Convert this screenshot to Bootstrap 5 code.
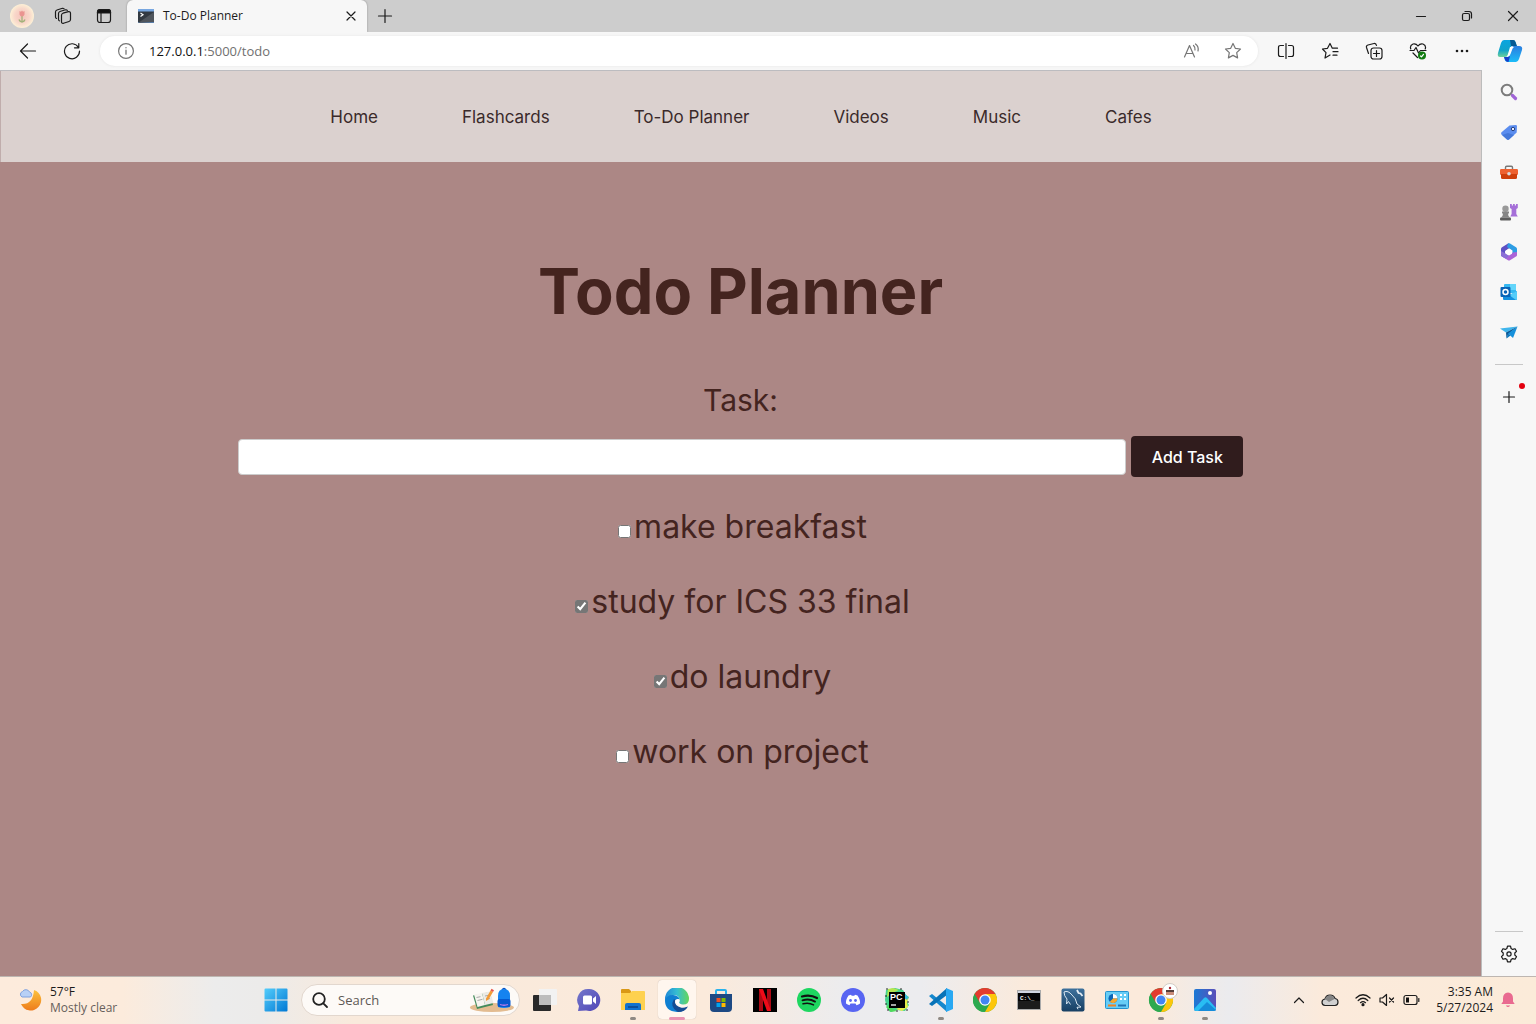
<!DOCTYPE html>
<html lang="en">
<head>
<meta charset="utf-8">
<meta name="viewport" content="width=device-width, initial-scale=1">
<title>To-Do Planner</title>
<link href="https://cdn.jsdelivr.net/npm/bootstrap@5.3.0/dist/css/bootstrap.min.css" rel="stylesheet">
<style>
  body { font-family: "Open Sans", "Noto Sans", sans-serif; font-size: 12px; line-height: 16px; color: #1b1b1b; background: #f7f7f7; }
  svg { display: block; flex: none; }
  button { padding: 0; border: 0; background: transparent; color: inherit; }
  .line-icon { fill: none; stroke: #1b1b1b; stroke-width: 1.2; stroke-linecap: round; stroke-linejoin: round; }
  .soft-icon { stroke: #767676; }

  .tab-strip { height: 32px; background: #cdcdcd; }
  .strip-tools { width: 127px; padding-left: 10px; gap: 20px; }
  .browser-tab { width: 240px; padding: 0 10px; background: #f7f7f7; border-radius: 6px 6px 0 0; box-shadow: 0 0 2px #888; clip-path: inset(-2px -2px 0 -2px); }
  .win-btn { width: 46px; }
  .new-tab { width: 36px; }
  .toolbar { height: 38px; background: #f7f7f7; }
  .tool-btn { width: 44px; height: 30px; }
  .toolbar-start { padding-left: 6px; padding-right: 6px; }
  .toolbar-end { padding-left: 6px; padding-right: 4px; }
  .address-bar { height: 30px; border-radius: 15px; background: #fff; box-shadow: 0 0 3px #e4e4e4; padding: 0 16px 0 18px; gap: 15px; }
  .address-text { font-size: 13px; color: #707070; }
  .address-text b { font-weight: 400; color: #111; }

  .web-page { background: #ac8785; border-top: 1px solid #bcbcc0; border-right: 1px solid #bcbcbc; font-family: Inter, sans-serif; color: #44241f; }
  .site-nav { height: 91px; background: #dbd1cf; border-left: 1px solid #c0adac; }
  .site-nav ul { gap: 84px; }
  .site-nav a { font-size: 17px; line-height: 24px; color: #3a2a2a; text-decoration: none; }
  .planner { font-size: 30px; line-height: 45px; padding-top: 84px; }
  .planner h1 { font-size: 63px; line-height: 90px; font-weight: 700; margin-bottom: 42px; }
  .task-entry { gap: 5px; margin-top: 13px; margin-bottom: 27px; }
  .task-input { width: 60%; height: 36px; border: 1px solid #ccc; border-radius: 4px; background: #fff; font-size: 16px; padding: 0 10px; }
  .add-btn { width: 112px; height: 41px; border-radius: 4px; background: #301c1d; color: #fff; font-size: 16px; font-weight: 500; line-height: 24px; }
  .task-list { display: grid; gap: 30px; font-size: 32px; }
  .task-list input { margin: 3px 3px 3px 4px; accent-color: #767676; }

  .side-rail { width: 54px; background: #f7f7f7; padding: 2px 0; }
  .rail-btn { width: 40px; height: 40px; }
  .rail-line { width: 28px; height: 1px; background: #c8c8c8; }
  .rail-line.upper { margin: 12px 0; }
  .rail-line.lower { margin: auto 0 2px; }
  .alert-dot { position: absolute; right: 4px; top: 6px; width: 6px; height: 6px; border-radius: 50%; background: #e3000f; }

  .taskbar { height: 48px; padding-bottom: 2px; border-top: 1px solid #bdb6b1; background: linear-gradient(90deg, #fdebdc 0, #fcebdc 8%, #ececec 14%, #ecebea 17%, #f9eadc 23%, #fbeadb 46%, #ececee 55%, #ececef 60%, #fbeadb 67%, #fbeadb 75%, #ebebee 80%, #fbeadb 86%, #fbebd9 100%); }
  .weather { width: 254px; padding-left: 18px; gap: 8px; }
  .dim-text { color: #66605b; }
  .app-btn { width: 44px; height: 45px; position: relative; }
  .app-btn.running::after { content: ""; position: absolute; left: 19px; bottom: 2px; width: 6px; height: 3px; border-radius: 2px; background: #8f8983; }
  .app-btn.active::before { content: ""; position: absolute; inset: 3px; border-radius: 4px; background: #fff6ee; box-shadow: 0 0 1px #b9aea5; }
  .app-btn.active::after { left: 14px; width: 16px; background: #e994b2; }
  .app-btn svg { position: relative; }
  .search-pill { width: 219px; height: 32px; margin: 0 3px; border-radius: 16px; background: #fdfaf7; border: 1px solid #e2d7ce; padding: 0 4px 0 9px; gap: 9px; }
  .search-pill input { min-width: 0; border: 0; background: transparent; outline: 0; font-size: 13px; color: #5d5955; padding: 0; }
  .search-pill input::placeholder { color: #5d5955; opacity: 1; }
  .tray { padding-right: 21px; gap: 8px; }
</style>
<script src="https://cdn.jsdelivr.net/npm/bootstrap@5.3.0/dist/js/bootstrap.bundle.min.js"></script>
</head>
<body class="d-flex flex-column min-vh-100">

<header>
  <div class="tab-strip d-flex">
    <div class="strip-tools d-flex align-items-center">
      <button aria-label="Profile"><svg width="24" height="24"><defs><radialGradient id="pf"><stop offset="0" stop-color="#f4c4bb"/><stop offset=".6" stop-color="#f8d6c9"/><stop offset="1" stop-color="#fdf0d6"/></radialGradient></defs><circle cx="12" cy="12" r="12" fill="url(#pf)"/><path d="M12 12v6M12 18q-2.500-.5-3-2.500M12 18q2.500-.5 3-2.500" stroke="#a3b27a" stroke-width="1.300" fill="none"/><path d="M9.500 7l1.500.8 1-1.300 1 1.300 1.500-.8v3.500q-.7 2-2.500 2t-2.500-2z" fill="#ea9490"/></svg></button>
      <button aria-label="Workspaces"><svg class="line-icon" width="18" height="18"><path d="M9 6.200l5.500-1.500q2-.3 2 1.500v6.300q0 1.500-1.500 2l-5.500 1.800q-2 .4-2-1.500V8.300q0-1.600 1.500-2.100z"/><path d="M5.500 13.800q-1 0-1-1.800V6.500q0-1.500 1.500-2l5.500-1.700q1.300-.3 1.800.7M2.500 11.500q-1-.3-1-1.500V5q0-1.500 1.500-2l5.500-1.700q1-.2 1.500.4"/></svg></button>
      <button aria-label="Tab actions" class="ms-1"><svg class="line-icon" width="16" height="16"><rect x="1.500" y="1.500" width="13" height="13" rx="2.500"/><path d="M1.500 5V4q0-2.500 2.500-2.500h8q2.500 0 2.500 2.500v1z" fill="#111"/><path d="M5 5v9"/></svg></button>
    </div>
    <div class="browser-tab d-flex align-items-center">
      <svg width="18" height="16"><rect x="1" y="1" width="16" height="14" fill="#333a42"/><path d="M1 1h16v2.500H1z" fill="#78a7e0"/><path d="M1 14.500h16" stroke="#5b83b4"/><path d="M1 15L17 4v10z" fill="#50565d"/><path d="M3.500 5l2.500 1.700-2.500 1.700" fill="none" stroke="#fff" stroke-width="1.200"/></svg>
      <span class="ms-2 flex-grow-1">To-Do Planner</span>
      <button aria-label="Close tab"><svg class="line-icon" width="12" height="12"><path d="M2 2l8 8M10 2l-8 8"/></svg></button>
    </div>
    <button class="new-tab d-flex align-items-center justify-content-center" aria-label="New tab"><svg class="line-icon" width="16" height="16"><path d="M8 1.500v13M1.500 8h13"/></svg></button>
    <div class="d-flex ms-auto">
      <button class="win-btn d-flex align-items-center justify-content-center" aria-label="Minimize"><svg class="line-icon" width="12" height="12"><path d="M1.500 6.500h9"/></svg></button>
      <button class="win-btn d-flex align-items-center justify-content-center" aria-label="Restore"><svg class="line-icon" width="12" height="12"><rect x="1.500" y="3.500" width="7" height="7" rx="1.500"/><path d="M4 1.500h4q2.500 0 2.500 2.500v4"/></svg></button>
      <button class="win-btn d-flex align-items-center justify-content-center" aria-label="Close"><svg class="line-icon" width="12" height="12"><path d="M1.500 1.500l9 9M10.500 1.500l-9 9"/></svg></button>
    </div>
  </div>

  <div class="toolbar d-flex align-items-center">
    <div class="toolbar-start d-flex">
      <button class="tool-btn d-flex align-items-center justify-content-center" aria-label="Back"><svg class="line-icon" width="18" height="18"><path d="M16.500 9h-15M8.500 2l-7 7 7 7"/></svg></button>
      <button class="tool-btn d-flex align-items-center justify-content-center" aria-label="Refresh"><svg class="line-icon" width="18" height="18"><path d="M15.500 5.500A7.500 7.500 0 1 0 16.500 9M15.800 1.500v4.300h-4.300"/></svg></button>
    </div>
    <div class="address-bar d-flex align-items-center flex-grow-1">
      <svg class="line-icon soft-icon" width="16" height="16"><circle cx="8" cy="8" r="7.400"/><path d="M8 7.200v4M8 4.600v.2" stroke-width="1.300"/></svg>
      <span class="address-text flex-grow-1"><b>127.0.0.1</b>:5000/todo</span>
      <button aria-label="Read aloud" class="me-2"><svg class="line-icon soft-icon" width="18" height="16"><path d="M1.500 14L6.500 2.500 11.500 14M3.200 10.500h6.600M10.500 2.500q2 1.800 1.500 4.500M12.500 1q3.500 2.500 2.500 7"/></svg></button>
      <button aria-label="Add to favorites"><svg class="line-icon soft-icon" width="18" height="18"><path d="M9 1.500l2.300 4.800 5.200.7-3.800 3.600.9 5.300L9 13.400l-4.600 2.500.9-5.300L1.500 7l5.200-.7z"/></svg></button>
    </div>
    <div class="toolbar-end d-flex">
      <button class="tool-btn d-flex align-items-center justify-content-center" aria-label="Split screen"><svg class="line-icon" width="18" height="18"><path d="M6.500 3.500h-3q-2 0-2 2v7q0 2 2 2h3M11.500 3.500h3q2 0 2 2v7q0 2-2 2h-3M9 1.500v15"/></svg></button>
      <button class="tool-btn d-flex align-items-center justify-content-center" aria-label="Favorites"><svg class="line-icon" width="18" height="18"><path d="M9 13l-5 3 1-5.300L1.500 7l5-.7 2.500-4.800 2.300 4.700h5.200M12 9.700h5M12 13.200h4"/></svg></button>
      <button class="tool-btn d-flex align-items-center justify-content-center" aria-label="Collections"><svg class="line-icon" width="18" height="18"><rect x="6" y="6" width="11" height="11" rx="2.500"/><path d="M11.500 8.500v6M8.500 11.500h6M3.500 11.500L1.500 5.500q-.5-2 1.500-2.500l6-1.500q2-.4 2.500 2"/></svg></button>
      <button class="tool-btn d-flex align-items-center justify-content-center" aria-label="Browser essentials"><svg class="line-icon" width="18" height="18"><path d="M1.800 7Q.5 3.500 4 2q3-.7 5 2 2-2.700 5-2 3.500 1.500 2.200 5M1 8.500h4l2-3 2.500 5.500L11.500 8.500H17M4 11l4.500 4.500"/><circle cx="13" cy="13.500" r="4" fill="#107c10" stroke="none"/><path d="M11.500 14l1 .8 2-2.500" stroke="#fff"/></svg></button>
      <button class="tool-btn d-flex align-items-center justify-content-center" aria-label="Settings and more"><svg width="18" height="18" fill="#1b1b1b"><circle cx="4" cy="9" r="1.300"/><circle cx="9" cy="9" r="1.300"/><circle cx="14" cy="9" r="1.300"/></svg></button>
      <button class="tool-btn ms-1 d-flex align-items-center justify-content-center" aria-label="Copilot"><svg width="26" height="26" viewBox="0 0 26 26"><defs><linearGradient id="c1" x2="0" y2="1"><stop stop-color="#0aa5e0"/><stop offset=".6" stop-color="#10a3cb"/><stop offset="1" stop-color="#6ed19b"/></linearGradient><linearGradient id="c2" x2="0" y2="1"><stop stop-color="#2b7de0"/><stop offset="1" stop-color="#1bbcf8"/></linearGradient></defs><path d="M7 2h9q2 0 2.500 2l1 4h-5L11 17q-.5 2-3 2H3q-3 0-2-4L4 5q1-3 3-3z" fill="url(#c1)"/><path d="M13 2h3q2 0 2.500 2l1.500 4h-6z" fill="#075a94"/><path d="M17 8h5q4 0 3 4l-3 9q-1 3-3 3h-8q-3 0-3.500-3L7 19h3q2 0 2.500-2l2-6q.5-3 2.500-3z" fill="url(#c2)"/><path d="M7 19h4l2-1-1.500 6q-3 0-3.700-3z" fill="#173fc9"/><path d="M13 9h4q-1.500 1-2 3l-1.500 4q-.5 2-3 2.500h-1q1-.5 1.500-2.500z" fill="#fff"/></svg></button>
    </div>
  </div>
</header>

<div class="d-flex flex-grow-1">
  <main class="web-page flex-grow-1">
    <nav class="site-nav d-flex align-items-center justify-content-center">
      <ul class="list-unstyled d-flex m-0">
        <li><a href="#">Home</a></li><li><a href="#">Flashcards</a></li><li><a href="#">To-Do Planner</a></li><li><a href="#">Videos</a></li><li><a href="#">Music</a></li><li><a href="#">Cafes</a></li>
      </ul>
    </nav>
    <section class="planner text-center">
      <h1>Todo Planner</h1>
      <form>
        <label class="d-block" for="task">Task:</label>
        <div class="task-entry d-flex align-items-center justify-content-center">
          <input class="task-input" type="text" id="task">
          <button class="add-btn" type="button">Add Task</button>
        </div>
      </form>
      <ul class="task-list list-unstyled m-0">
        <li><input type="checkbox" id="t1"><label for="t1">make breakfast</label></li>
        <li><input type="checkbox" id="t2" checked><label for="t2">study for ICS 33 final</label></li>
        <li><input type="checkbox" id="t3" checked><label for="t3">do laundry</label></li>
        <li><input type="checkbox" id="t4"><label for="t4">work on project</label></li>
      </ul>
    </section>
  </main>

  <aside class="side-rail d-flex flex-column align-items-center">
    <button class="rail-btn d-flex align-items-center justify-content-center" aria-label="Search"><svg width="20" height="20" fill="none"><circle cx="8" cy="8" r="5.300" stroke="#7c7c7c" stroke-width="2"/><path d="M11.800 11.800l2 2" stroke="#888" stroke-width="2"/><path d="M13.500 13.500l3 3" stroke="#a065d6" stroke-width="3.200" stroke-linecap="round"/></svg></button>
    <button class="rail-btn d-flex align-items-center justify-content-center" aria-label="Shopping"><svg width="20" height="20"><path d="M10.500 3.500L17 3l1 .8-.3 6.700-7.700 7q-1 .8-2 0L2.500 12.500q-1-1.200 0-2.200z" fill="#5b8def"/><path d="M3 13l6-2 6 2-5 4.500q-1 .6-2 0z" fill="#4579da"/><circle cx="14" cy="7" r="1.700" fill="#e6edff" stroke="#28417e"/></svg></button>
    <button class="rail-btn d-flex align-items-center justify-content-center" aria-label="Tools"><svg width="20" height="20"><path d="M6.500 7V5.500q0-1.200 1.200-1.200h4.600q1.200 0 1.200 1.200V7" fill="none" stroke="#777" stroke-width="1.400"/><rect x="1" y="7" width="18" height="6" rx="1.200" fill="#ee6130"/><path d="M2 12h16v3.500q0 1.500-1.500 1.500h-13Q2 17 2 15.500z" fill="#ce3f0c"/><circle cx="10" cy="11.800" r="1.800" fill="#d7dbe0"/></svg></button>
    <button class="rail-btn d-flex align-items-center justify-content-center" aria-label="Games"><svg width="20" height="20"><path d="M11 2h1.800v1.500H14V2h1.800v1.500H17V2h1.800v4l-1.500 1v5l1.500 2.500h-7.500L12.600 12V7L11 6z" fill="#a56fd8"/><circle cx="6.500" cy="6.700" r="3.200" fill="#999"/><path d="M3 9.500h7v2H9q0 3 2 4H2q2-1 2-4H3z" fill="#858585"/><rect x="1" y="15.500" width="11" height="3" rx="1" fill="#5c5c5c"/></svg></button>
    <button class="rail-btn d-flex align-items-center justify-content-center" aria-label="Microsoft 365"><svg width="20" height="20"><path d="M10 1.500Q9.500 1.300 9 1.600L3 5.200q-1 .6-1 1.700v6q0 1 1 1.700l3 1.500V9l6-4z" fill="#5e50c4"/><path d="M9 1.600q1-.5 2 0l6 3.600q1 .6 1 1.700v6.300L13.500 11V8.500L8 5z" fill="#2e9de4"/><path d="M18 10v3q0 1-1 1.600l-6 3.600q-1 .6-2 0L3 14.600l4.500-1.100 6.500-3z" fill="#ab65d8"/><path d="M2 9l4.500 2.500 3.500 2-3 3.300-4-2.200q-1-.7-1-1.700z" fill="#8b6ed6"/><path d="M10 6.800l3 1.700v3.300l-3 1.700-3-1.700V8.500z" fill="#fff"/></svg></button>
    <button class="rail-btn d-flex align-items-center justify-content-center" aria-label="Outlook"><svg width="20" height="20"><rect x="5" y="2" width="12" height="9" rx="1" fill="#35b8f1"/><path d="M11 2h6v6h-6z" fill="#63d5fa"/><path d="M4 9l7 4 7-4v8q0 1-1 1H5q-1 0-1-1z" fill="#1490df"/><path d="M18 9v8q0 1-1 1l-7-5z" fill="#55cdf9"/><rect x="1.500" y="5" width="10" height="10" rx="1" fill="#0864b7"/><circle cx="6.500" cy="10" r="2.500" fill="none" stroke="#fff" stroke-width="1.500"/></svg></button>
    <button class="rail-btn d-flex align-items-center justify-content-center" aria-label="Drop"><svg width="20" height="20"><path d="M1 6.500l17.500-2L7 10.500z" fill="#3fb5ec"/><path d="M7 10.500l11.500-6L9 12.500 7.500 16.500z" fill="#0b5793"/><path d="M9 11.500l9.500-7L14 16z" fill="#1690db"/><path d="M7.500 16.500L9 11.500l2.500 2z" fill="#0b76bd"/></svg></button>
    <div class="rail-line upper"></div>
    <button class="rail-btn position-relative d-flex align-items-center justify-content-center" aria-label="Customize"><svg class="line-icon" width="14" height="14"><path d="M7 1.500v11M1.500 7h11"/></svg><span class="alert-dot"></span></button>
    <div class="rail-line lower"></div>
    <button class="rail-btn d-flex align-items-center justify-content-center" aria-label="Settings"><svg class="line-icon" width="18" height="18" viewBox="0 0 18 18"><path d="M7.500 1.200h3l.6 2.300 1.600.9 2.300-.7 1.500 2.600-1.700 1.700v2l1.700 1.700-1.500 2.600-2.300-.7-1.600.9-.6 2.300h-3l-.6-2.300-1.600-.9-2.300.7-1.500-2.600L3.200 10V8L1.500 6.300 3 3.700l2.300.7 1.600-.9z"/><circle cx="9" cy="9" r="2.100"/></svg></button>
  </aside>
</div>

<footer class="taskbar d-flex align-items-center">
  <div class="weather d-flex align-items-center">
    <svg width="24" height="26"><defs><linearGradient id="mo" x2="0" y2="1"><stop stop-color="#fcc23c"/><stop offset="1" stop-color="#ee7c1c"/></linearGradient></defs><path d="M16 3a10.500 10.500 0 1 1-13 14Q15 18 16 3z" fill="url(#mo)"/><path d="M4 10a3 3 0 0 1 .5-5.500 4 4 0 0 1 7 .5 2.800 2.800 0 0 1 1 5z" fill="#b8d0f6" stroke="#7fa1de"/></svg>
    <div><div>57°F</div><div class="dim-text">Mostly clear</div></div>
  </div>
  <button class="app-btn d-flex align-items-center justify-content-center" aria-label="Start"><svg width="24" height="24"><defs><linearGradient id="wi" x2="1" y2="1"><stop stop-color="#54cdfb"/><stop offset="1" stop-color="#0078d4"/></linearGradient></defs><path d="M.5 1.500q0-1 1-1h10v11H.5zM12.500.5h10q1 0 1 1v10h-11zM.5 12.500h11v11h-10q-1 0-1-1zM12.500 12.500h11v10q0 1-1 1h-10z" fill="url(#wi)"/></svg></button>
  <div class="search-pill d-flex align-items-center">
    <svg width="18" height="18" fill="none" stroke="#222" stroke-width="1.800" stroke-linecap="round"><circle cx="8" cy="8" r="5.800"/><path d="M12.300 12.300L16 16"/></svg>
    <input class="flex-grow-1" type="text" placeholder="Search" aria-label="Search">
    <svg width="46" height="28"><ellipse cx="23" cy="21.500" rx="22" ry="4.500" fill="#e3bc91"/><path d="M4 9.500l17-3.500 3 13-16 4z" fill="#438b5b"/><path d="M5 8.500L13 7l3 12-7.500 2z" fill="#f6f4ef"/><path d="M13 7l8-1.500 3.500 11.500-8.500 2z" fill="#eceae5"/><path d="M7.500 11.500l4-.8M8.500 14.500l5-1.200M16 10l4-.8M17 13.500l4-1" stroke="#aaa"/><path d="M17 12.500l4.500-8 2.500 1.500-4.500 7.500-2.500 1.500z" fill="#f39b37"/><path d="M21.500 4.500l1-1.800 2.500 1.500-1 1.800z" fill="#e8554b"/><path d="M33 4.500q2-4 4 0" fill="none" stroke="#0a52c2" stroke-width="1.500"/><path d="M29 10q0-7 6-7t6 7v11q-6 2-12 0z" fill="#1583f0"/><rect x="28.500" y="13" width="13" height="8" rx="2" fill="#0659cf"/><path d="M31 18.500q4 1.500 8 0" stroke="#b87bea" fill="none" stroke-width="1.300"/></svg>
  </div>
  <button class="app-btn d-flex align-items-center justify-content-center" aria-label="Task view"><svg width="24" height="24"><rect x="0" y="7" width="18" height="16" rx="1" fill="#292929"/><path d="M6 1h17q1 0 1 1v14q0 1-1 1H6z" fill="#f2f2f2"/><path d="M6 7h12v10H6z" fill="#bcbcbc"/></svg></button>
  <button class="app-btn d-flex align-items-center justify-content-center" aria-label="Chat"><svg width="24" height="24"><defs><linearGradient id="ch" x2="1" y2="1"><stop stop-color="#7377ca"/><stop offset="1" stop-color="#5146b7"/></linearGradient></defs><path d="M12 1a11 11 0 1 1-3 21.500L1 23l1-5A11 11 0 0 1 12 1z" fill="url(#ch)"/><rect x="6" y="7.500" width="9" height="9" rx="1.500" fill="#fff"/><path d="M16 10.500l3-2.500v8l-3-2.500z" fill="#fff"/></svg></button>
  <button class="app-btn running d-flex align-items-center justify-content-center" aria-label="File Explorer"><svg width="24" height="24"><path d="M0 2q0-1 1-1h7l2 2v5H0z" fill="#d99816"/><path d="M0 5h9l2-2h12q1 0 1 1v18H0z" fill="#fed14f"/><path d="M4 22v-5q0-2 2-2h12q2 0 2 2v5z" fill="#1173cf"/><path d="M7 18h10v2H7z" fill="#0b519d"/></svg></button>
  <button class="app-btn running active d-flex align-items-center justify-content-center" aria-label="Microsoft Edge"><svg width="24" height="24"><defs><linearGradient id="eg"><stop stop-color="#2087d7"/><stop offset=".5" stop-color="#35bed2"/><stop offset="1" stop-color="#66d659"/></linearGradient></defs><path d="M0 11A12 12 0 0 1 24 11q0 5.500-6 5.500-5-.5-3.500-3Q15 8 10 7 3 7 0 14z" fill="url(#eg)"/><path d="M0 12.500Q2 6.500 8 7q6 .5 6.500 4.500-3-1.500-4.500 1-1 6 5 8 4 .5 7.500-2Q19 24 12 24 0 23 0 12.500z" fill="#0f7fd2"/><path d="M9 11q-5 8 4 13 7 0 10-5.500-3 1.500-6.500 1.200Q9 18 10 12z" fill="#164c93"/><path d="M14.500 11.500q.3 1.500-.5 2.500-.5 2 2 2.700-4 .5-5-2.500 0-3.500 3.500-2.700z" fill="#fff"/></svg></button>
  <button class="app-btn d-flex align-items-center justify-content-center" aria-label="Microsoft Store"><svg width="24" height="24"><path d="M7 6V3q0-1 1-1h8q1 0 1 1v3" fill="none" stroke="#28b2ed" stroke-width="2"/><path d="M1 6h22v14q0 4-4 4H5q-4 0-4-4z" fill="#1d4983"/><path d="M7.500 10h4v4h-4z" fill="#f25022"/><path d="M12.500 10h4v4h-4z" fill="#7fba00"/><path d="M7.500 15h4v4h-4z" fill="#00a4ef"/><path d="M12.500 15h4v4h-4z" fill="#ffb900"/></svg></button>
  <button class="app-btn d-flex align-items-center justify-content-center" aria-label="Netflix"><svg width="24" height="24"><path d="M0 0h24v24H0z"/><path d="M6 1h4v22H6zM14 1h4v22h-4z" fill="#ad0914"/><path d="M6 1h4l8 22h-4z" fill="#f00b19"/></svg></button>
  <button class="app-btn d-flex align-items-center justify-content-center" aria-label="Spotify"><svg width="24" height="24" fill="none" stroke="#111" stroke-linecap="round"><circle cx="12" cy="12" r="12" fill="#1ed760" stroke="none"/><path d="M5 8.500q8-2.500 15 1.500" stroke-width="2.200"/><path d="M5.500 12.300q7-2 12.500 1.300" stroke-width="1.900"/><path d="M6 15.700q6-1.500 10.500 1.200" stroke-width="1.500"/></svg></button>
  <button class="app-btn d-flex align-items-center justify-content-center" aria-label="Discord"><svg width="24" height="24"><circle cx="12" cy="12" r="12" fill="#5865f2"/><path d="M7.500 7.500l2.500-.8.7 1.100h2.600l.7-1.100 2.500.8q3 4.500 2.500 8-1.500 1.300-3.500 1.700l-1-1.600h-5l-1 1.600q-2-.4-3.500-1.700-.5-3.500 2.500-8z" fill="#fff"/><circle cx="9.500" cy="12.500" r="1.400" fill="#5865f2"/><circle cx="14.500" cy="12.500" r="1.400" fill="#5865f2"/></svg></button>
  <button class="app-btn d-flex align-items-center justify-content-center" aria-label="PyCharm"><svg width="24" height="24"><path d="M1 2l9-2 8 2 3 5 3 2-2 5 2 3-4 6-8-1-7 2-3-4-2-8z" fill="#45d48b"/><path d="M3 1l5-1 6 2-7 3-5 4z" fill="#b5e650"/><path d="M18 8l5 3-1 4 1 4-6 4-6-2 7-3z" fill="#e7ed47"/><path d="M19 5l4 4-1 3-3-2z" fill="#37bbe3"/><path d="M1 19l4-3 3 5 4 2-6 1z" fill="#50d95c"/><g fill="#111"><circle cx="2" cy="1" r=".8"/><circle cx="16" cy="1" r=".8"/><circle cx="1" cy="8" r=".8"/><circle cx="1" cy="16" r=".8"/><circle cx="3" cy="22" r=".8"/><circle cx="12" cy="23" r=".8"/><circle cx="22" cy="22" r=".8"/><circle cx="23" cy="14" r=".8"/></g><rect x="4" y="4" width="16" height="16"/><text x="5" y="12" font-family="Liberation Sans" font-weight="700" font-size="9" fill="#fff">PC</text><path d="M6 17h5" stroke="#fff" stroke-width="1.300"/></svg></button>
  <button class="app-btn running d-flex align-items-center justify-content-center" aria-label="Visual Studio Code"><svg width="24" height="24"><path d="M0 8l3-2 15 12v6z" fill="#1487cd"/><path d="M0 16l3 2L18 7V0z" fill="#0873b8"/><path d="M17 0l7 3v18l-7 3z" fill="#29a8f2"/></svg></button>
  <button class="app-btn d-flex align-items-center justify-content-center" aria-label="Chrome"><svg width="24" height="24"><g id="chrome"><circle cx="12" cy="12" r="12" fill="#2da94f"/><path d="M12 12L1.600 6A12 12 0 0 1 22.400 6z" fill="#e33b2e"/><path d="M12 6h10.400A12 12 0 0 1 12 24l5.200-9z" fill="#fdc60b"/><path d="M1.600 6L6.800 15 12 12 12 6z" fill="#e33b2e"/><path d="M1.600 6L6.800 15 12 24A12 12 0 0 1 1.600 6z" fill="#2da94f"/><circle cx="12" cy="12" r="5.800" fill="#fff"/><circle cx="12" cy="12" r="4.500" fill="#4285f4"/></g></svg></button>
  <button class="app-btn d-flex align-items-center justify-content-center" aria-label="Command Prompt"><svg width="24" height="24"><rect x=".5" y="2.500" width="23" height="19" fill="#050505" stroke="#aaa"/><path d="M1 3h22v2H1z" fill="#d0d5df"/><path d="M1 21V13h22v8z" fill="#1c1c1c"/><text x="3" y="12" font-family="Liberation Mono" font-weight="700" font-size="6" fill="#fff">C:\_</text></svg></button>
  <button class="app-btn d-flex align-items-center justify-content-center" aria-label="MySQL Workbench"><svg width="24" height="24"><defs><linearGradient id="my" x2="0" y2="1"><stop stop-color="#3e719c"/><stop offset="1" stop-color="#173f63"/></linearGradient></defs><rect x=".5" y=".5" width="23" height="23" rx="2" fill="url(#my)"/><path d="M3 4q4-2 8 3 4 3 5 9l4 3-4 .3 1 2M3 4q0 4 3 7l-.5 5 2-2.500 2 3" fill="none" stroke="#d9e6f1"/><path d="M16 2l1.500 3 2 .5 2 2.500" stroke="#e5edf5" stroke-width="1.800" fill="none"/></svg></button>
  <button class="app-btn d-flex align-items-center justify-content-center" aria-label="Control Panel"><svg width="24" height="24"><rect x=".5" y="3.500" width="23" height="17" rx="1" fill="#67cdf6" stroke="#2393cf"/><circle cx="8" cy="10.500" r="4.500" fill="#0b66b7"/><path d="M8 10.500V6a4.500 4.500 0 0 1 4.500 4.500z" fill="#fff"/><path d="M8 10.500h4.500A4.500 4.500 0 0 1 4.800 13.700z" fill="#f7a62b"/><path d="M15 7h2M15 11h2M19 7h2M19 11h2" stroke="#fff" stroke-width="2"/><path d="M3 17.500h8" stroke="#f08322" stroke-width="2"/><path d="M13 17.500h8" stroke="#2274b5" stroke-width="2"/></svg></button>
  <button class="app-btn running d-flex align-items-center justify-content-center" aria-label="Chrome profile"><svg class="overflow-visible" width="24" height="24"><use href="#chrome"/><circle cx="21" cy="3" r="7.500" fill="#fff" stroke="#d2cbc5"/><path d="M17 3h8v4h-8z" fill="#c98b78"/><path d="M17 2h8v2h-8z" fill="#553e39"/><circle cx="21" cy="0" r="1.200" fill="#a82835"/></svg></button>
  <button class="app-btn running d-flex align-items-center justify-content-center" aria-label="Photos"><svg width="24" height="24"><defs><linearGradient id="ph" x2="1"><stop stop-color="#1b79d5"/><stop offset="1" stop-color="#5a4fb9"/></linearGradient></defs><rect x="1" y="1" width="22" height="22" rx="2" fill="url(#ph)"/><path d="M1 21L11 10q1.500-1.500 3 0l9 10q0 3-2 3H3q-2 0-2-2z" fill="#29bdf3"/><path d="M5 23l9-9 9 8-2 1z" fill="#168cda"/><circle cx="17" cy="5" r="2" fill="#fff"/></svg></button>

  <div class="tray d-flex align-items-center ms-auto">
    <button aria-label="Hidden icons" class="me-2"><svg class="line-icon" width="12" height="12"><path d="M1.500 8.500L6 4l4.500 4.500"/></svg></button>
    <button aria-label="OneDrive" class="me-2"><svg width="18" height="14"><path d="M4 12.500q-3-.5-3-3.300Q1 6.500 4 6q1-4 5-4t5 3.500q3 .3 3 3.500t-3 3.500z" fill="#d0d0d0" stroke="#222" stroke-width="1.200"/><path d="M4 6q1-3.500 5-3.500 4 0 4.500 3.500L8 9z" fill="#858585"/></svg></button>
    <button aria-label="Wi-Fi"><svg class="line-icon" width="16" height="14"><path d="M1 5q7-6.500 14 0M3.200 7.500q4.800-4.500 9.600 0M5.500 9.700q2.500-2.200 5 0"/><circle cx="8" cy="11.700" r="1" fill="#1b1b1b"/></svg></button>
    <button aria-label="Volume muted"><svg class="line-icon" width="16" height="14"><path d="M1 5h2.500L7.500 1.500v11L3.500 9H1zM10.500 5l4 4M14.500 5l-4 4"/></svg></button>
    <button aria-label="Battery"><svg class="line-icon" width="17" height="14"><rect x="1" y="2.500" width="13" height="9" rx="2"/><path d="M3 4.500h3v5H3z" fill="#111" stroke="none"/><path d="M15.800 5.500v3"/></svg></button>
    <div class="text-end ms-2"><div>3:35 AM</div><div>5/27/2024</div></div>
    <button aria-label="Notifications"><svg width="14" height="16"><path d="M7 .5q5 .3 5 6v3l1.700 2.500H.3L2 9.500v-3q0-5.700 5-6z" fill="#e96a90"/><path d="M4.800 13.500h4.400q-2.200 3-4.400 0z" fill="#e96a90"/></svg></button>
  </div>
</footer>
</body>
</html>
